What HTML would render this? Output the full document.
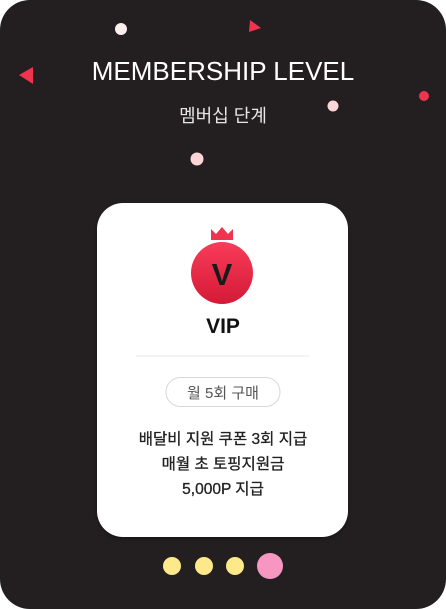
<!DOCTYPE html>
<html><head><meta charset="utf-8"><style>
html,body{margin:0;padding:0;width:446px;height:609px;background:#fff;overflow:hidden}
.bg{position:absolute;left:0;top:0;width:446px;height:609px;background:#231f20;border-radius:30px}
.t{position:absolute;left:0;width:446px;text-align:center;font-family:"Liberation Sans","Noto Sans CJK KR",sans-serif}
.card{position:absolute;left:97px;top:203px;width:251px;height:334px;background:#fff;border-radius:26px;box-shadow:0 2px 3px rgba(0,0,0,.3)}
.dot{position:absolute;border-radius:50%}
</style></head><body>
<div class="bg"></div>
<svg style="position:absolute;left:0;top:0" width="446" height="609">
<circle cx="121" cy="29" r="6" fill="#fdeef0"/>
<polygon points="250,20 261,28 249,32" fill="#f0334f"/>
<polygon points="19,75 33,67 33,84" fill="#f0334f"/>
<circle cx="424" cy="96" r="5" fill="#f0334f"/>
<circle cx="333" cy="106" r="5.5" fill="#fdd4d8"/>
<circle cx="197" cy="159" r="6.5" fill="#fdd4d8"/>
</svg>
<div class="t" style="top:56px;font-size:26px;color:#fff">MEMBERSHIP LEVEL</div>
<div class="t" style="top:102px;font-size:18px;color:#e6e6e6">멤버십 단계</div>
<div class="card"></div>
<svg style="position:absolute;left:0;top:0" width="446" height="609">
<defs><linearGradient id="g" x1="0" y1="0" x2="0" y2="1"><stop offset="0" stop-color="#f83c5a"/><stop offset="1" stop-color="#d41a36"/></linearGradient></defs>
<polygon points="211,240 211,229 216,234 222,227 228,234 233,229 233,240" fill="#f0334f"/>
<circle cx="222" cy="273" r="31" fill="url(#g)"/>
<text x="222" y="285" text-anchor="middle" font-family="Liberation Sans,sans-serif" font-weight="bold" font-size="31" fill="#1a1a1a">V</text>
<line x1="136" y1="356" x2="310" y2="356" stroke="#e8e8e8" stroke-width="1"/>
<rect x="166" y="377.5" width="114" height="29" rx="14.5" fill="#fff" stroke="#d8d8d8"/>
</svg>
<div class="t" style="top:315px;font-size:21px;font-weight:bold;color:#111">VIP</div>
<div class="t" style="top:382px;font-size:15px;color:#555">월 5회 구매</div>
<div class="t" style="top:427px;font-size:15.5px;line-height:25px;color:#222;-webkit-text-stroke:0.3px #222">배달비 지원 쿠폰 3회 지급<br>매월 초 토핑지원금<br>5,000P 지급</div>
<div class="dot" style="left:163px;top:557px;width:18px;height:18px;background:#fde98a"></div>
<div class="dot" style="left:195px;top:557px;width:18px;height:18px;background:#fde98a"></div>
<div class="dot" style="left:226px;top:557px;width:18px;height:18px;background:#fde98a"></div>
<div class="dot" style="left:257px;top:553px;width:26px;height:26px;background:#f797c1"></div>
</body></html>
